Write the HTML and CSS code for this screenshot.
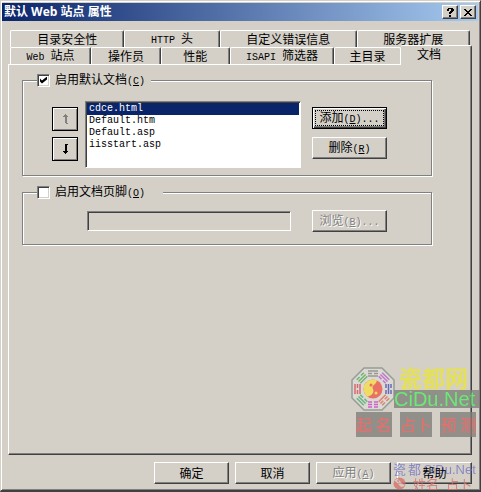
FILE: index.html
```html
<!DOCTYPE html>
<html lang="zh-CN">
<head>
	<meta charset="utf-8">
	<title>默认 Web 站点 属性</title>
	<link rel="stylesheet" href="styles.css">
</head>
<body>
<div class="dialog">
	<div class="titlebar">
		<h1>默认 Web 站点 属性</h1>
		<button type="button" class="btn sys" aria-label="?">
			<svg width="8" height="9" viewBox="0 0 8 9" shape-rendering="crispEdges"><path d="M1 0h6v1h1v2h-1v1h-1v1h-1v1h-2v-2h1v-1h1v-2h-2v2h-2v-2h1zM3 7h2v2h-2z"/></svg>
		</button>
		<button type="button" class="btn sys" aria-label="X">
			<svg width="8" height="7" viewBox="0 0 8 7" shape-rendering="crispEdges"><path d="M0 0h2v1h1v1h2v-1h1v-1h2v1h-1v1h-1v1h-1v1h1v1h1v1h1v1h-2v-1h-1v-1h-2v1h-1v1h-2v-1h1v-1h1v-1h1v-1h-1v-1h-1v-1h-1z"/></svg>
		</button>
	</div>

	<div class="tabs" role="tablist">
		<div class="tabrow back">
			<button type="button" role="tab">目录安全性</button>
			<button type="button" role="tab"><span class="en">HTTP </span>头</button>
			<button type="button" role="tab">自定义错误信息</button>
			<button type="button" role="tab">服务器扩展</button>
		</div>
		<div class="tabrow front">
			<button type="button" role="tab"><span class="en">Web </span>站点</button>
			<button type="button" role="tab">操作员</button>
			<button type="button" role="tab">性能</button>
			<button type="button" role="tab"><span class="en">ISAPI </span>筛选器</button>
			<button type="button" role="tab">主目录</button>
			<button type="button" role="tab" class="active" aria-selected="true">文档</button>
		</div>
	</div>

	<div class="panel" role="tabpanel">
		<fieldset>
			<legend><input type="checkbox" id="defdoc" checked><label for="defdoc">启用默认文档<span class="en">(<u>C</u>)</span></label></legend>
			<div class="docs">
				<div class="stack">
					<button type="button" class="btn arrow" disabled aria-label="up">
						<svg width="7" height="10" viewBox="0 0 7 10" shape-rendering="crispEdges"><path d="M3 0h1v1h1v1h1v1h-1v6h1v1h-2v-1h-1v-6h-2v-1h1v-1h1z"/></svg>
					</button>
					<button type="button" class="btn arrow" aria-label="down">
						<svg width="7" height="10" viewBox="0 0 7 10" shape-rendering="crispEdges"><path d="M3 0h3v1h-1v6h1v1h-1v1h-1v1h-1v-1h-1v-1h-1v-1h2z"/></svg>
					</button>
				</div>
				<select class="list" size="5" aria-label="启用默认文档">
					<option selected>cdce.html</option>
					<option>Default.htm</option>
					<option>Default.asp</option>
					<option>iisstart.asp</option>
				</select>
				<div class="stack">
					<button type="button" class="btn default">添加<span class="en">(<u>D</u>)...</span></button>
					<button type="button" class="btn">删除<span class="en">(<u>R</u>)</span></button>
				</div>
			</div>
		</fieldset>

		<fieldset>
			<legend class="wide"><input type="checkbox" id="footer"><label for="footer">启用文档页脚<span class="en">(<u>O</u>)</span></label></legend>
			<div class="footer">
				<input type="text" class="path" disabled aria-label="启用文档页脚">
				<button type="button" class="btn" disabled>浏览<span class="en">(<u>B</u>)...</span></button>
			</div>
		</fieldset>
	</div>

	<div class="actions">
		<button type="button" class="btn">确定</button>
		<button type="button" class="btn">取消</button>
		<button type="button" class="btn" disabled>应用<span class="en">(<u>A</u>)</span></button>
		<button type="button" class="btn help"><span>帮助</span></button>
	</div>

	<div class="stamp">
		<div class="stamp-top">
			<svg width="46" height="46" viewBox="-23 -23 46 46">
				<path d="M-9-21H9L21-9V9L9 21H-9L-21 9V-9Z" fill="#dddcd5" stroke="#85918a" stroke-width="1.5"/>
				<g fill="none" stroke-width="1.5">
					<path d="M-5-18H5M-5-15.500H-1M1-15.500H5M-5-13H5" stroke="#8a8a88"/>
					<path d="M-5-18H5M-5-15.500H5M-5-13H-1M1-13H5" stroke="#c060d0" transform="rotate(45)"/>
					<path d="M-5-18H-1M1-18H5M-5-15.500H5M-5-13H-1M1-13H5" stroke="#4a50b8" transform="rotate(90)"/>
					<path d="M-5-18H-1M1-18H5M-5-15.500H-1M1-15.500H5M-5-13H5" stroke="#df7060" transform="rotate(135)"/>
					<path d="M-5-18H-1M1-18H5M-5-15.500H-1M1-15.500H5M-5-13H-1M1-13H5" stroke="#cf45cf" transform="rotate(180)"/>
					<path d="M-5-18H5M-5-15.500H5M-5-13H-1M1-13H5" stroke="#50b070" transform="rotate(225)"/>
					<path d="M-5-18H5M-5-15.500H-1M1-15.500H5M-5-13H5" stroke="#d75058" transform="rotate(270)"/>
					<path d="M-5-18H-1M1-18H5M-5-15.500H5M-5-13H5" stroke="#58b060" transform="rotate(315)"/>
				</g>
				<circle r="9.500" fill="#f0584c"/>
				<path d="M4-8.600A9.500 9.500 0 0 0-6 7.400C-3 8 2 4 0 0C-2-4 3-4 4-8.600Z" fill="#f5e04b"/>
				<circle cx="-2" cy="-4" r="1.500" fill="#f0584c"/>
				<circle cx="3" cy="4" r="1.500" fill="#f5e04b"/>
			</svg>
			<div class="stamp-name">
				<span class="yellow">瓷都网</span>
				<span class="green">CiDu.Net</span>
			</div>
		</div>
		<div class="stamp-red"><span>起 名</span><span>占卜</span><span>预 测</span></div>
	</div>
	<div class="stamp2">
		<div class="blue"><span>瓷</span><span>都</span><span>CiDu.Net</span></div>
		<div class="red">
			<svg width="13" height="13" viewBox="0 0 13 13"><circle cx="6.500" cy="6.500" r="6" fill="#d8706a"/><path d="M1 4Q4 0 7 4T12 8Q9 12 6 8T1 4Z" fill="#d9c5bd"/><circle cx="5" cy="4" r="1" fill="#c9756f"/></svg>
			<span>姓名</span><span>占卜</span>
		</div>
	</div>
</div>
</body>
</html>
```

FILE: styles.css
```css
* { box-sizing: border-box; }

body {
	margin: 0;
	background: #d4d0c8;
	color: #000;
	font: 12px/14px "Noto Sans CJK SC", sans-serif;
}

button, input, select { font: inherit; color: inherit; margin: 0; }
.en { font-family: "Liberation Mono", monospace; font-size: 10px; white-space: pre; }

.dialog {
	position: relative;
	display: flex;
	flex-direction: column;
	min-height: 100vh;
	padding: 1px 8px 6px 7px;
	border: 1px solid #d4d0c8;
	border-right-color: #404040;
	border-bottom: 2px solid #404040;
	box-shadow: inset 1px 1px 0 #fff, inset -1px -1px 0 #808080;
	overflow: hidden;
}

/* title bar */
.titlebar {
	display: flex;
	align-items: center;
	gap: 2px;
	height: 18px;
	margin: 1px -6px 0 -6px;
	padding: 0 2px;
	background: linear-gradient(to right, #0a246a, #a6caf0);
}
.titlebar h1 {
	flex: 1;
	margin: 0;
	color: #fff;
	font: bold 12px/18px "Open Sans", "Noto Sans CJK SC", sans-serif;
}

.btn {
	width: 75px;
	height: 22px;
	padding: 0;
	background: #d4d0c8;
	border: 1px solid;
	border-color: #fff #404040 #404040 #fff;
	box-shadow: inset -1px -1px 0 #808080;
	white-space: nowrap;
}
.btn:disabled { color: #808080; text-shadow: 1px 1px 0 #fff; }
.btn.default {
	border-color: #000;
	box-shadow: inset 1px 1px 0 #fff, inset -1px -1px 0 #404040, inset -2px -2px 0 #808080;
	outline: 1px dotted #000;
	outline-offset: -4px;
}
.btn.sys { display: grid; place-items: center; width: 16px; height: 14px; }

/* tabs */
.tabs { padding: 9px 2px 0; }
.tabrow { display: flex; height: 17px; }
.tabrow button {
	flex: 1 1 0;
	padding: 0;
	background: #d4d0c8;
	border: 1px solid #fff;
	border-right: 1px solid #404040;
	border-bottom: 0;
	border-radius: 2px 2px 0 0;
	box-shadow: inset -1px 0 0 #808080;
	white-space: nowrap;
}
.back button:nth-child(1) { flex-grow: 114; }
.back button:nth-child(2) { flex-grow: 95; }
.back button:nth-child(3) { flex-grow: 137; }
.back button:nth-child(4) { flex-grow: 113; }
.front button:nth-child(1) { flex-grow: 81; }
.front button:nth-child(2), .front button:nth-child(3) { flex-grow: 69; }
.front button:nth-child(4) { flex-grow: 104; }
.front button:nth-child(5) { flex-grow: 67; border-right-color: #fff; box-shadow: none; }
.front .active {
	flex-grow: 57;
	height: 20px;
	margin: -2px -2px 0 0;
	padding: 0 14px 4px 0;
	z-index: 1;
	border-left: 0;
}

.panel {
	flex: 1;
	padding: 8px 39px 0 13px;
	border: 1px solid;
	border-color: #fff #404040 #404040 #fff;
	box-shadow: inset -1px -1px 0 #808080;
}

fieldset {
	min-width: 0;
	margin: 0 0 9px;
	padding: 0;
	border: 1px solid #808080;
	box-shadow: 1px 1px 0 #fff, inset 1px 1px 0 #fff;
}
legend {
	display: flex;
	align-items: center;
	width: 114px;
	height: 14px;
	margin-left: 14px;
	padding: 0;
	background: #d4d0c8;
	white-space: nowrap;
}
legend.wide { width: 126px; }
legend input {
	appearance: none;
	width: 13px;
	height: 13px;
	margin-right: 5px;
	background: #fff;
	border: 1px solid;
	border-color: #808080 #fff #fff #808080;
	box-shadow: inset 1px 1px 0 #404040, inset -1px -1px 0 #d4d0c8;
}
legend input:checked::before {
	content: "";
	display: block;
	width: 7px;
	height: 7px;
	margin: 2px;
	background: #000;
	clip-path: polygon(0 28%, 28% 57%, 100% 0, 100% 43%, 28% 100%, 0 71%);
}

.docs { display: flex; align-items: flex-start; padding: 14px 44px 7px 29px; }
.stack { display: flex; flex-direction: column; gap: 8px; padding-top: 6px; }
.arrow {
	display: grid;
	place-items: center;
	width: 26px;
	height: 24px;
	border-color: #000;
	box-shadow: inset 1px 1px 0 #fff, inset -1px -1px 0 #808080;
}
.docs .stack:first-child { gap: 6px; }
.arrow:disabled svg { fill: #808080; }

.list {
	flex: 1;
	min-width: 0;
	height: 67px;
	margin: 0 11px 0 7px;
	padding: 1px;
	background: #fff;
	border: 1px solid;
	border-color: #808080 #fff #fff #808080;
	border-radius: 0;
	box-shadow: inset 1px 1px 0 #404040;
	outline: 0;
	overflow: hidden;
	font: 10px/12px "Liberation Mono", monospace;
}
.list option { min-height: 12px; height: 12px; padding: 0 2px; }
.list option:checked { color: #fff; background: #0a246a linear-gradient(#0a246a, #0a246a); }

.footer { display: flex; align-items: center; gap: 21px; padding: 11px 44px 12px 64px; }
.path {
	flex: 1;
	min-width: 0;
	height: 20px;
	background: #d4d0c8;
	border: 1px solid;
	border-color: #808080 #fff #fff #808080;
	box-shadow: inset 1px 1px 0 #404040;
}

.actions { display: flex; justify-content: flex-end; gap: 6px; padding-top: 7px; }
.help span { position: relative; z-index: 3; }

/* site stamps lying over the dialog */
.stamp {
	position: absolute;
	right: 0;
	bottom: 53px;
	width: 130px;
	z-index: 2;
	opacity: .8;
	pointer-events: none;
}
.stamp-top { display: flex; }
.stamp-top svg { flex: none; }
.stamp-name { flex: 1; margin-left: -2px; }
.stamp-name span { display: block; }
.yellow {
	height: 24px;
	padding-left: 5px;
	color: #e8e43c;
	font-size: 23px;
	line-height: 22px;
	font-weight: bold;
}
.green {
	height: 18px;
	background: #80807a;
	color: #50f060;
	font: 20px/18px "Liberation Sans", sans-serif;
	white-space: nowrap;
}
.stamp-red { display: flex; justify-content: space-between; padding: 0 4px 0 6px; }
.stamp-red span {
	height: 25px;
	background: #80807a;
	color: #ff5050;
	font: 16px/25px "Noto Sans CJK SC", sans-serif;
	white-space: nowrap;
}
.stamp2 {
	position: absolute;
	right: 0;
	bottom: 0;
	z-index: 2;
	width: 87px;
	opacity: .8;
	white-space: nowrap;
	pointer-events: none;
}
.blue {
	display: flex;
	gap: 2px;
	color: #7777c4;
	font: 13px/15px "Liberation Sans", "Noto Sans CJK SC", sans-serif;
}
.red { display: flex; gap: 7px; color: #d9706c; font-size: 13px; line-height: 13px; }
```
